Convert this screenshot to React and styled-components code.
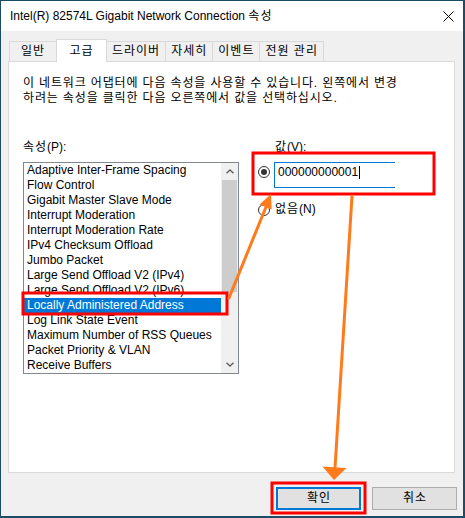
import styled, { createGlobalStyle } from "styled-components";

const GlobalStyle = createGlobalStyle`
  body {
    margin: 0;
    background: #1d4d66;
    font-family: "Liberation Sans", "Noto Sans CJK KR", sans-serif;
    font-size: 12px;
    color: #000;
  }
`;

const Screen = styled.div`
  position: relative;
  width: 465px;
  height: 518px;
  overflow: hidden;
`;

const Window = styled.div`
  width: 462px;
  height: 515px;
  margin: 1px 0 0 1px;
  background: #f0f0f0;
  display: flex;
  flex-direction: column;
`;

const TitleBar = styled.div`
  height: 30px;
  flex: none;
  background: #fff;
  display: flex;
  align-items: center;
  justify-content: space-between;
  padding: 0 9px 0 9px;
`;

const Title = styled.span`
  line-height: 15px;
`;

// Hangul in Noto CJK runs a little narrower than the original UI font
const Ko = styled.span`
  letter-spacing: 1px;
`;

const Body = styled.div`
  padding: 8px 8px 0 7px;
`;

const TabRow = styled.div`
  height: 22px;
  display: flex;
  align-items: flex-end;
  padding-left: 1px;
`;

const Tab = styled.div`
  position: relative;
  z-index: ${(p) => (p.$active ? 2 : 1)};
  box-sizing: border-box;
  min-width: ${(p) => (p.$active ? 51 : 48)}px;
  height: ${(p) => (p.$active ? 23 : 20)}px;
  margin-bottom: ${(p) => (p.$active ? -1 : 0)}px;
  margin-left: -1px;
  padding: 0 5px;
  display: flex;
  align-items: center;
  justify-content: center;
  background: ${(p) => (p.$active ? "#fff" : "#f0f0f0")};
  border: 1px solid #d9d9d9;
  border-bottom: none;
  line-height: 15px;
  letter-spacing: 1px;
  white-space: nowrap;

  &:first-child {
    margin-left: 0;
  }
`;

const Panel = styled.div`
  box-sizing: border-box;
  height: 412px;
  background: #fff;
  border: 1px solid #d9d9d9;
  padding: 14px 14px;
`;

const Description = styled.p`
  margin: 0;
  line-height: 15px;
  letter-spacing: 0.85px;
  white-space: nowrap;
`;

const Columns = styled.div`
  display: flex;
  gap: 19px;
  margin-top: 34px;
`;

const LeftCol = styled.div`
  width: 216px;
`;

const FieldLabel = styled.div`
  line-height: 15px;
  margin-bottom: 7px;
  margin-left: ${(p) => p.$indent || 0}px;
`;

const ListBox = styled.div`
  box-sizing: border-box;
  height: 212px;
  border: 1px solid #828790;
  display: flex;
`;

const Items = styled.div`
  flex: 1;
`;

const Item = styled.div`
  height: 15px;
  line-height: 15px;
  padding-left: 3px;
  white-space: nowrap;
  background: ${(p) => (p.$selected ? "#0078d7" : "transparent")};
  color: ${(p) => (p.$selected ? "#fff" : "#000")};
`;

const ScrollBar = styled.div`
  width: 17px;
  background: #f0f0f0;
  display: flex;
  flex-direction: column;
  align-items: center;
`;

const ScrollArrow = styled.div`
  height: 17px;
  width: 17px;
  display: flex;
  align-items: center;
  justify-content: center;
`;

const Thumb = styled.div`
  width: 15px;
  height: 112px;
  background: #cdcdcd;
`;

const Track = styled.div`
  flex: 1;
`;

const RightCol = styled.div`
  display: flex;
  flex-direction: column;
`;

const OptionRow = styled.div`
  display: flex;
  gap: 5px;
  align-items: ${(p) => (p.$top ? "flex-start" : "center")};
  margin-top: ${(p) => p.$gap || 0}px;
  line-height: 15px;
`;

const Radio = styled.span`
  box-sizing: border-box;
  flex: none;
  width: 12px;
  height: 12px;
  margin-top: ${(p) => p.$offset || 0}px;
  border: 1px solid #333;
  border-radius: 50%;
  background: #fff;
  display: flex;
  align-items: center;
  justify-content: center;

  &::after {
    content: "";
    width: 6px;
    height: 6px;
    border-radius: 50%;
    background: ${(p) => (p.$checked ? "#333" : "transparent")};
  }
`;

const ValueBox = styled.div`
  box-sizing: border-box;
  width: 121px;
  height: 26px;
  border: 1px solid #0078d7;
  border-right: none;
  padding: 2px 0 0 3px;
  line-height: 15px;
  display: flex;
  align-items: flex-start;
  margin-left: -1px;
`;

const Caret = styled.span`
  display: inline-block;
  width: 1px;
  height: 13px;
  margin: 1px 0 0 1px;
  background: #000;
`;

const Footer = styled.div`
  display: flex;
  justify-content: flex-end;
  gap: 11px;
  padding: 14px 6px 0 0;
`;

const Button = styled.button`
  box-sizing: border-box;
  width: 85px;
  height: 23px;
  margin: 0;
  padding: 0 0 0 1px;
  background: #e1e1e1;
  border: ${(p) => (p.$default ? "2px solid #0078d7" : "1px solid #adadad")};
  font: inherit;
  color: #000;
  line-height: 15px;
  letter-spacing: 1px;
`;

const Overlay = styled.svg`
  position: absolute;
  left: 0;
  top: 0;
  pointer-events: none;
`;

const items = [
  "Adaptive Inter-Frame Spacing",
  "Flow Control",
  "Gigabit Master Slave Mode",
  "Interrupt Moderation",
  "Interrupt Moderation Rate",
  "IPv4 Checksum Offload",
  "Jumbo Packet",
  "Large Send Offload V2 (IPv4)",
  "Large Send Offload V2 (IPv6)",
  "Locally Administered Address",
  "Log Link State Event",
  "Maximum Number of RSS Queues",
  "Packet Priority & VLAN",
  "Receive Buffers",
];

const tabs = ["일반", "고급", "드라이버", "자세히", "이벤트", "전원 관리"];

const Chevron = ({ down }) => (
  <svg width="8" height="5" viewBox="0 0 8 5">
    <polyline
      points={down ? "0.5,0.8 4,4 7.5,0.8" : "0.5,4.2 4,1 7.5,4.2"}
      fill="none"
      stroke="#606060"
      strokeWidth="1.4"
    />
  </svg>
);

const App = () => {
  return (
    <Screen>
      <GlobalStyle />
      <Window>
        <TitleBar>
          <Title>
            Intel(R) 82574L Gigabit Network Connection <Ko>속성</Ko>
          </Title>
          <svg width="11" height="11" viewBox="0 0 11 11">
            <path d="M0.5 0.5 L10.5 10.5 M10.5 0.5 L0.5 10.5" stroke="#000" strokeWidth="1" />
          </svg>
        </TitleBar>
        <Body>
          <TabRow>
            {tabs.map((t, i) => (
              <Tab key={t} $active={i === 1}>
                {t}
              </Tab>
            ))}
          </TabRow>
          <Panel>
            <Description>
              이 네트워크 어댑터에 다음 속성을 사용할 수 있습니다. 왼쪽에서 변경
              <br />
              하려는 속성을 클릭한 다음 오른쪽에서 값을 선택하십시오.
            </Description>
            <Columns>
              <LeftCol>
                <FieldLabel>
                  <Ko>속성</Ko>(P):
                </FieldLabel>
                <ListBox>
                  <Items>
                    {items.map((it) => (
                      <Item key={it} $selected={it === "Locally Administered Address"}>
                        {it}
                      </Item>
                    ))}
                  </Items>
                  <ScrollBar>
                    <ScrollArrow>
                      <Chevron />
                    </ScrollArrow>
                    <Thumb />
                    <Track />
                    <ScrollArrow>
                      <Chevron down />
                    </ScrollArrow>
                  </ScrollBar>
                </ListBox>
              </LeftCol>
              <RightCol>
                <FieldLabel $indent={17}>
                  <Ko>값</Ko>(V):
                </FieldLabel>
                <OptionRow $top>
                  <Radio $checked $offset={4} />
                  <ValueBox>
                    000000000001
                    <Caret />
                  </ValueBox>
                </OptionRow>
                <OptionRow $gap={14}>
                  <Radio />
                  <span>
                    <Ko>없음</Ko>(N)
                  </span>
                </OptionRow>
              </RightCol>
            </Columns>
          </Panel>
        </Body>
        <Footer>
          <Button $default>확인</Button>
          <Button>취소</Button>
        </Footer>
      </Window>
      <Overlay width="465" height="518" viewBox="0 0 465 518">
        <g fill="none" stroke="#ff0000" strokeWidth="3">
          <rect x="23" y="293" width="204" height="21" />
          <rect x="253" y="153" width="181" height="41" />
          <rect x="272" y="483" width="93" height="30" />
        </g>
        <g stroke="#ff7a1a" strokeWidth="3" strokeLinecap="round">
          <line x1="229" y1="298" x2="266" y2="207" />
          <line x1="352" y1="196" x2="335" y2="468" />
        </g>
        <g fill="#ff7a1a">
          <polygon points="271,194 259.6,204.4 271.6,209.4" />
          <polygon points="334,480 322.5,466.5 346.5,468" />
        </g>
      </Overlay>
    </Screen>
  );
};

export default App;
